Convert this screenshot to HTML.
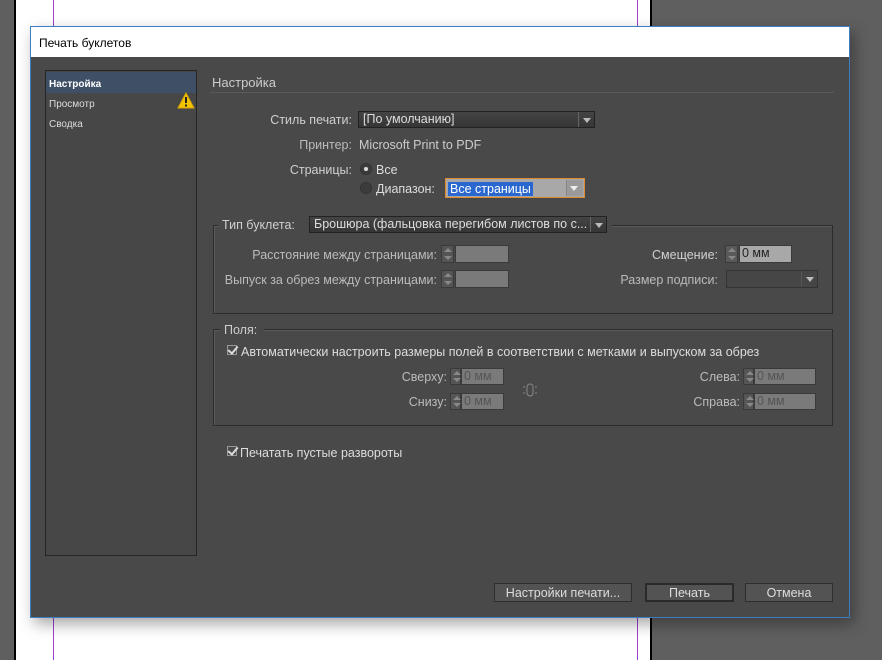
<!DOCTYPE html>
<html><head><meta charset="utf-8"><style>
*{margin:0;padding:0;box-sizing:border-box}
body{width:882px;height:660px;position:relative;overflow:hidden;background:#5f5f5f;font-family:"Liberation Sans",sans-serif;font-size:12.5px;color:#d0d0d0}
.a{position:absolute}
.t{position:absolute;white-space:nowrap;line-height:14px;margin-top:1px}
.r{text-align:right}
.dd{position:absolute;background:linear-gradient(#444,#363636);border:1px solid #222;color:#ddd;padding-left:4px;line-height:15px;white-space:nowrap;overflow:hidden}
.arr{position:absolute;right:0;top:0;bottom:0;width:16px;border-left:1px solid #666}
.arr:after{content:"";position:absolute;left:4px;top:6px;border-left:4px solid transparent;border-right:4px solid transparent;border-top:5px solid #bbb}
.sp{position:absolute;width:13px;background:#555;border:1px solid #3a3a3a}
.sp:before{content:"";position:absolute;left:2px;top:2px;border-left:4px solid transparent;border-right:4px solid transparent;border-bottom:4px solid #888}
.sp:after{content:"";position:absolute;left:2px;bottom:2px;border-left:4px solid transparent;border-right:4px solid transparent;border-top:4px solid #888}
.f{position:absolute;background:#7a7a7a;border:1px solid #3a3a3a;color:#555;padding-left:2px;line-height:15px}
.grp{position:absolute;border:1px solid #2c2c2c;box-shadow:1px 1px 0 #5a5a5a inset}
.cb{position:absolute;width:10px;height:10px;border:1px solid #999;background:#4a4a4a}
.cb:after{content:"";position:absolute;left:2px;top:-2px;width:4px;height:8px;border-right:2px solid #ddd;border-bottom:2px solid #ddd;transform:rotate(40deg)}
.btn{position:absolute;top:583px;height:19px;background:#535353;border:1px solid #2e2e2e;color:#ddd;text-align:center;line-height:18px;font-size:12.5px}
</style></head><body>
<div class="a" style="left:16px;top:0;width:634px;height:660px;background:#fff"></div>
<div class="a" style="left:14px;top:0;width:2px;height:660px;background:#000"></div>
<div class="a" style="left:650px;top:0;width:2px;height:660px;background:#000"></div>
<div class="a" style="left:53px;top:0;width:1px;height:660px;background:#a040d0"></div>
<div class="a" style="left:637px;top:0;width:1px;height:660px;background:#a040d0"></div>

<div class="a" style="left:30px;top:26px;width:820px;height:592px;background:#494949;border:1px solid #3a80c0;box-shadow:4px 6px 14px rgba(0,0,0,.35)"></div>
<div class="a" style="left:31px;top:27px;width:818px;height:30px;background:#fff"></div>
<div class="t" style="left:39px;top:35px;color:#000;font-size:12px">Печать буклетов</div>

<div class="a" style="left:45px;top:70px;width:152px;height:486px;border:1px solid #252525;background:#474747"></div>
<div class="a" style="left:46px;top:72px;width:150px;height:21px;background:#3f5066"></div>
<div class="t" style="left:49px;top:77px;font-size:10px;font-weight:bold;color:#fff">Настройка</div>
<div class="t" style="left:49px;top:97px;font-size:10px;color:#ddd">Просмотр</div>
<div class="t" style="left:49px;top:117px;font-size:10px;color:#ddd">Сводка</div>
<svg class="a" style="left:177px;top:92px" width="18" height="17"><path d="M9 1 L17 16 L1 16 Z" fill="#f5c400" stroke="#d8a800"/><rect x="8" y="5" width="2" height="6" fill="#222"/><rect x="8" y="12.5" width="2" height="2" fill="#222"/></svg>

<div class="t" style="left:212px;top:75px;font-size:13px;color:#ccc">Настройка</div>
<div class="a" style="left:210px;top:92px;width:624px;height:1px;background:#2a2a2a;border-bottom:1px solid #5a5a5a"></div>

<div class="t r" style="left:200px;width:152px;top:112px">Стиль печати:</div>
<div class="dd" style="left:358px;top:111px;width:237px;height:17px">[По умолчанию]<div class="arr"></div></div>
<div class="t r" style="left:200px;width:152px;top:137px;color:#bbb">Принтер:</div>
<div class="t" style="left:359px;top:137px;color:#ccc">Microsoft Print to PDF</div>
<div class="t r" style="left:200px;width:152px;top:162px">Страницы:</div>
<div class="a" style="left:360px;top:163px;width:12px;height:12px;border-radius:50%;background:#3c3c3c;border:1px solid #333"></div>
<div class="a" style="left:364px;top:167px;width:4px;height:4px;border-radius:50%;background:#ddd"></div>
<div class="t" style="left:376px;top:162px;color:#ddd">Все</div>
<div class="a" style="left:360px;top:182px;width:12px;height:12px;border-radius:50%;background:#3c3c3c;border:1px solid #333"></div>
<div class="t" style="left:376px;top:181px;color:#ddd">Диапазон:</div>
<div class="a" style="left:445px;top:178px;width:140px;height:20px;border:1px solid #e08a2e;background:#a8a8a8"></div>
<div class="t" style="left:448px;top:181px;background:#2a68d0;color:#fff;padding:0 2px">Все страницы</div>
<div class="a" style="left:566px;top:180px;width:17px;height:16px;border-left:1px solid #888;background:#9a9a9a"></div>
<div class="a" style="left:570px;top:186px;border-left:4px solid transparent;border-right:4px solid transparent;border-top:5px solid #eee"></div>

<div class="grp" style="left:213px;top:225px;width:620px;height:89px"></div>
<div class="a" style="left:218px;top:216px;width:394px;height:18px;background:#494949"></div>
<div class="t" style="left:222px;top:217px">Тип буклета:</div>
<div class="dd" style="left:309px;top:216px;width:298px;height:17px">Брошюра (фальцовка перегибом листов по с...<div class="arr"></div></div>
<div class="t r" style="left:200px;width:237px;top:247px;color:#bbb">Расстояние между страницами:</div>
<div class="sp" style="left:441px;top:245px;height:18px"></div>
<div class="f" style="left:455px;top:245px;width:54px;height:18px"></div>
<div class="t r" style="left:200px;width:237px;top:272px;color:#bbb">Выпуск за обрез между страницами:</div>
<div class="sp" style="left:441px;top:270px;height:18px"></div>
<div class="f" style="left:455px;top:270px;width:54px;height:18px"></div>
<div class="t r" style="left:600px;width:118px;top:247px">Смещение:</div>
<div class="sp" style="left:725px;top:245px;height:18px;background:#5a5a5a"></div>
<div class="f" style="left:739px;top:245px;width:53px;height:18px;background:#a8a8a8;color:#222">0 мм</div>
<div class="t r" style="left:600px;width:118px;top:272px;color:#bbb">Размер подписи:</div>
<div class="dd" style="left:726px;top:270px;width:92px;height:18px;background:#464646;border-color:#333"><div class="arr" style="border-color:#555"></div></div>

<div class="grp" style="left:213px;top:329px;width:620px;height:97px"></div>
<div class="a" style="left:220px;top:322px;width:44px;height:16px;background:#494949"></div>
<div class="t" style="left:224px;top:322px;color:#ccc">Поля:</div>
<div class="cb" style="left:227px;top:345px"></div>
<div class="t" style="left:241px;top:344px;color:#ddd">Автоматически настроить размеры полей в соответствии с метками и выпуском за обрез</div>
<div class="t r" style="left:340px;width:107px;top:369px;color:#bbb">Сверху:</div>
<div class="sp" style="left:450px;top:368px;height:17px;width:11px"></div>
<div class="f" style="left:461px;top:368px;width:43px;height:17px">0 мм</div>
<div class="t r" style="left:340px;width:107px;top:394px;color:#bbb">Снизу:</div>
<div class="sp" style="left:450px;top:393px;height:17px;width:11px"></div>
<div class="f" style="left:461px;top:393px;width:43px;height:17px">0 мм</div>
<div class="t r" style="left:630px;width:110px;top:369px;color:#bbb">Слева:</div>
<div class="sp" style="left:743px;top:368px;height:17px;width:11px"></div>
<div class="f" style="left:754px;top:368px;width:62px;height:17px">0 мм</div>
<div class="t r" style="left:630px;width:110px;top:394px;color:#bbb">Справа:</div>
<div class="sp" style="left:743px;top:393px;height:17px;width:11px"></div>
<div class="f" style="left:754px;top:393px;width:62px;height:17px">0 мм</div>
<svg class="a" style="left:522px;top:382px" width="16" height="16"><rect x="5" y="2" width="6" height="12" rx="3" fill="none" stroke="#888"/><path d="M1 5h2M1 11h2M13 5h2M13 11h2" stroke="#888"/></svg>

<div class="cb" style="left:227px;top:446px"></div>
<div class="t" style="left:240px;top:445px;color:#ddd">Печатать пустые развороты</div>

<div class="btn" style="left:494px;width:138px">Настройки печати...</div>
<div class="btn" style="left:645px;width:89px;border:2px solid #2a2a2a;line-height:16px">Печать</div>
<div class="btn" style="left:745px;width:88px">Отмена</div>
</body></html>
